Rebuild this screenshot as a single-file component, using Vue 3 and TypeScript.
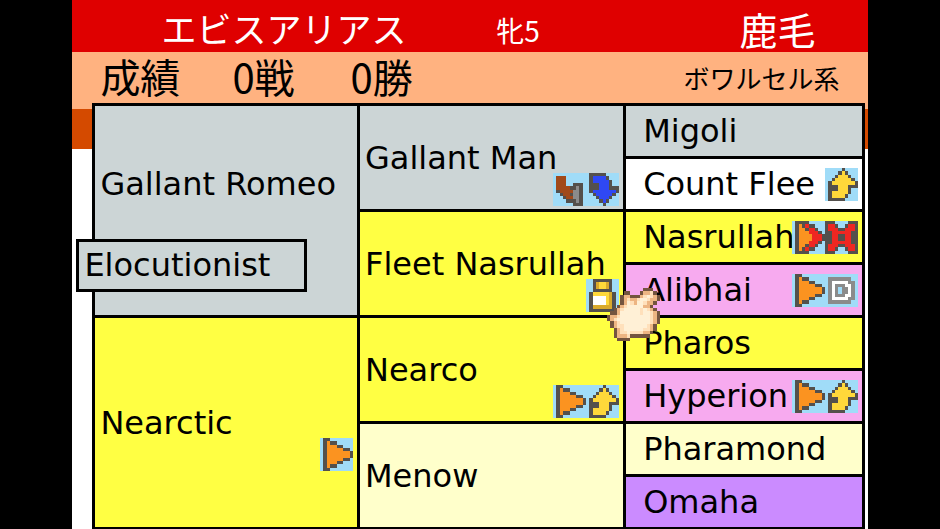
<script setup lang="ts">
import { h, type FunctionalComponent } from 'vue'

type Tone = 'ash' | 'white' | 'lemon' | 'pink' | 'cream' | 'violet'

interface Ancestor {
  name: string
  tone: Tone
  span: number
  level: 'sire' | 'grand' | 'great'
  icons?: string[]
  mate?: string
  pointed?: boolean
}

const palette: Record<string, string> = {
  K: '#54504c',
  O: '#fb9320',
  Y: '#ffd83a',
  A: '#d9a92c',
  B: '#2f48f4',
  R: '#ee2722',
  N: '#a14a1b',
  G: '#8b8b8b',
  W: '#ffffff',
  D: '#74543f',
  P: '#edb583',
  C: '#ffe0bb',
  L: '#fff0d6',
}

const turnUp = [
  '.....K....',
  '....KYK...',
  '...KYYYK..',
  '..KYYYYYK.',
  '.KYYYYYYYK',
  '.KKKYYYKKK',
  '.KKKYYYK..',
  '.KYYYYYK..',
  '.KYYYYK...',
  '.KKKKK....',
]

const sprites: Record<string, string[]> = {
  turnUp,
  turnDown: [...turnUp].reverse().map((row) => row.replace(/Y/g, 'B')),
  play: [
    '.KK.......',
    '.KOKK.....',
    '.KOOOKK...',
    '.KOOOOOKK.',
    '.KOOOOOOOK',
    '.KOOOOOOOK',
    '.KOOOOOKK.',
    '.KOOOKK...',
    '.KOKK.....',
    '.KK.......',
  ],
  playDouble: [
    '.KKKK.....',
    '.KOKRKK...',
    '.KOOKRRK..',
    '.KOOORRRK.',
    '.KOOOORRRK',
    '.KOOOORRRK',
    '.KOOORRRK.',
    '.KOOKRRK..',
    '.KOKRKK...',
    '.KKKK.....',
  ],
  bow: [
    'KKK....KKK',
    'KRRK..KRRK',
    'KRRRKKRRRK',
    'KKRRRRRRKK',
    'KKRRKKRRKK',
    'KKRRKKRRKK',
    'KKRRRRRRKK',
    'KRRRKKRRRK',
    'KRRK..KRRK',
    'KKK....KKK',
  ],
  letter: [
    '..........',
    '.GGGGGGG..',
    '.GWWWWWGG.',
    '.GWGGGWWG.',
    '.GWG.GGWG.',
    '.GWG.GGWG.',
    '.GWGGGWWG.',
    '.GWWWWWGG.',
    '.GGGGGGG..',
    '..........',
  ],
  boot: [
    '..........',
    '.NNN......',
    '.NNN......',
    '.NNN..KKK.',
    '.NNNNKKGK.',
    '.KNNNNGGK.',
    '..KNNKGGK.',
    '...KNNGGK.',
    '....KKKGK.',
    '......KKK.',
  ],
  bottle: [
    '..KKKKKK..',
    '..KAYYAK..',
    '..KAYYAK..',
    '..KKKKKK..',
    '.KYYYYYAK.',
    '.KWWWWYAK.',
    '.KWWWWYAK.',
    '.KWWWWYAK.',
    '.KAAAAAAK.',
    '.KKKKKKKK.',
  ],
  hand: [
    '...........DDD..',
    '.....DD...DPPCD.',
    '....DPPDDDPCLCPD',
    '....DPCPPCLLCPPD',
    '....DPLCPLLCPPD.',
    '...DPCLLLLLPPD..',
    '..DPCLLLLLCLCPD.',
    '.DDPLLLLLLCLLCPD',
    'DPPCLLLLLLLLLCPD',
    'DPCLLLLLLLLLLCPD',
    '.DPCLLLLLLLLLCPD',
    '.DPCCLLLLLLLCPD.',
    '..DPCLLLLLLCCPD.',
    '..DPCCLCCCCPPD..',
    '..DPPPCDDDDDD...',
    '...DDDD.........',
  ],
}

const Sprite: FunctionalComponent<{ name: string }> = (props) => {
  const rows = sprites[props.name]
  const pixels = rows.flatMap((row, y) =>
    [...row].flatMap((key, x) =>
      key === '.' ? [] : [h('rect', { x, y, width: 1, height: 1, fill: palette[key] })],
    ),
  )
  return h(
    'svg',
    {
      viewBox: `0 0 ${rows[0].length} ${rows.length}`,
      'shape-rendering': 'crispEdges',
      'aria-hidden': 'true',
    },
    pixels,
  )
}
Sprite.props = ['name']

const pedigree: Ancestor[][] = [
  [
    { name: 'Gallant Romeo', tone: 'ash', span: 4, level: 'sire', mate: 'Elocutionist' },
    { name: 'Gallant Man', tone: 'ash', span: 2, level: 'grand', icons: ['boot', 'turnDown'] },
    { name: 'Migoli', tone: 'ash', span: 1, level: 'great' },
  ],
  [{ name: 'Count Flee', tone: 'white', span: 1, level: 'great', icons: ['turnUp'] }],
  [
    { name: 'Fleet Nasrullah', tone: 'lemon', span: 2, level: 'grand', icons: ['bottle'] },
    { name: 'Nasrullah', tone: 'lemon', span: 1, level: 'great', icons: ['playDouble', 'bow'] },
  ],
  [{ name: 'Alibhai', tone: 'pink', span: 1, level: 'great', icons: ['play', 'letter'], pointed: true }],
  [
    { name: 'Nearctic', tone: 'lemon', span: 4, level: 'sire', icons: ['play'] },
    { name: 'Nearco', tone: 'lemon', span: 2, level: 'grand', icons: ['play', 'turnUp'] },
    { name: 'Pharos', tone: 'lemon', span: 1, level: 'great' },
  ],
  [{ name: 'Hyperion', tone: 'pink', span: 1, level: 'great', icons: ['play', 'turnUp'] }],
  [
    { name: 'Menow', tone: 'cream', span: 2, level: 'grand' },
    { name: 'Pharamond', tone: 'cream', span: 1, level: 'great' },
  ],
  [{ name: 'Omaha', tone: 'violet', span: 1, level: 'great' }],
]
</script>

<template>
  <div class="page">
    <main class="screen">
      <header class="title">
        <h1 class="horse">エビスアリアス</h1>
        <span class="age">牝5</span>
        <span class="coat">鹿毛</span>
      </header>
      <section class="record">
        <span class="label">成績</span>
        <span class="runs">0戦</span>
        <span class="wins">0勝</span>
        <span class="line">ボワルセル系</span>
      </section>
      <section class="tree">
        <table class="pedigree">
          <colgroup>
            <col class="col-sire" />
            <col class="col-grand" />
            <col class="col-great" />
          </colgroup>
          <tbody>
            <tr v-for="(row, index) in pedigree" :key="index">
              <td
                v-for="cell in row"
                :key="cell.name"
                :rowspan="cell.span"
                :class="[cell.tone, cell.level, { paired: cell.mate }]"
              >
                {{ cell.name }}
                <span v-if="cell.mate" class="mate">{{ cell.mate }}</span>
                <span v-if="cell.icons" class="icons">
                  <Sprite v-for="icon in cell.icons" :key="icon" :name="icon" class="icon" />
                </span>
                <Sprite v-if="cell.pointed" name="hand" class="cursor" />
              </td>
            </tr>
          </tbody>
        </table>
      </section>
    </main>
  </div>
</template>

<style>
body {
  margin: 0;
  background: #000;
}
</style>

<style scoped>
.page {
  display: flex;
  justify-content: center;
  min-height: 100vh;
  background: #000;
  color: #000;
  font-family: 'DejaVu Sans', 'Noto Sans CJK JP', sans-serif;
}

.screen {
  display: flex;
  flex-direction: column;
  width: 84.6%;
  background: #fff;
}

.title,
.record {
  box-sizing: border-box;
  font-family: 'Noto Sans CJK JP', sans-serif;
  line-height: 40px;
  white-space: nowrap;
}

.title {
  display: grid;
  grid-template-columns: 333fr 242fr auto;
  align-items: center;
  height: 52px;
  padding: 4px 52px 0 89px;
  background: #df0000;
  color: #fff;
}

.horse {
  margin: 0;
  font-size: 35px;
  font-weight: 400;
}

.age {
  padding-top: 4px;
  font-size: 28px;
}

.coat {
  padding-top: 2px;
  font-size: 38px;
}

.record {
  display: flex;
  align-items: center;
  height: 51px;
  padding: 0 28px 4px;
  background: #ffb280;
  font-size: 40px;
}

.runs {
  margin-left: 52px;
}

.wins {
  margin-left: 56px;
}

.line {
  margin-left: auto;
  padding-top: 4px;
  font-size: 26px;
}

.tree {
  flex: 1;
  padding: 0 3px 0 20px;
  background: linear-gradient(#ffb280 6px, #d44a00 6px, #d44a00 46px, #fff 46px);
}

.pedigree {
  width: 100%;
  table-layout: fixed;
  border-collapse: collapse;
}

.col-sire {
  width: 34.4%;
}

.col-grand {
  width: 34.6%;
}

.col-great {
  width: 31%;
}

td {
  position: relative;
  box-sizing: border-box;
  height: 53px;
  padding: 0;
  border: 3px solid #000;
  font-size: 32px;
  line-height: 40px;
  vertical-align: middle;
  white-space: nowrap;
}

.sire,
.grand {
  padding-left: 5px;
}

.great {
  padding-left: 17px;
}

.paired {
  padding-bottom: 53px;
}

.ash {
  background: #ccd5d6;
}

.white {
  background: #fff;
}

.lemon {
  background: #ffff43;
}

.pink {
  background: #f7aaef;
}

.cream {
  background: #ffffcb;
}

.violet {
  background: #cb8bff;
}

.mate {
  position: absolute;
  top: 133px;
  left: -19px;
  z-index: 1;
  box-sizing: border-box;
  width: 231px;
  height: 53px;
  padding: 3px 5px;
  border: 3px solid #000;
  background: #ccd5d6;
}

.icons {
  position: absolute;
  right: 4px;
  top: calc(50% + 15px);
  display: flex;
  background: #a0dcf8;
}

.great .icons {
  top: calc(50% - 16px);
}

.icon {
  display: block;
  width: 33px;
  height: 33px;
}

.cursor {
  position: absolute;
  top: 23px;
  left: -19px;
  z-index: 2;
  width: 53px;
  height: 53px;
}
</style>
